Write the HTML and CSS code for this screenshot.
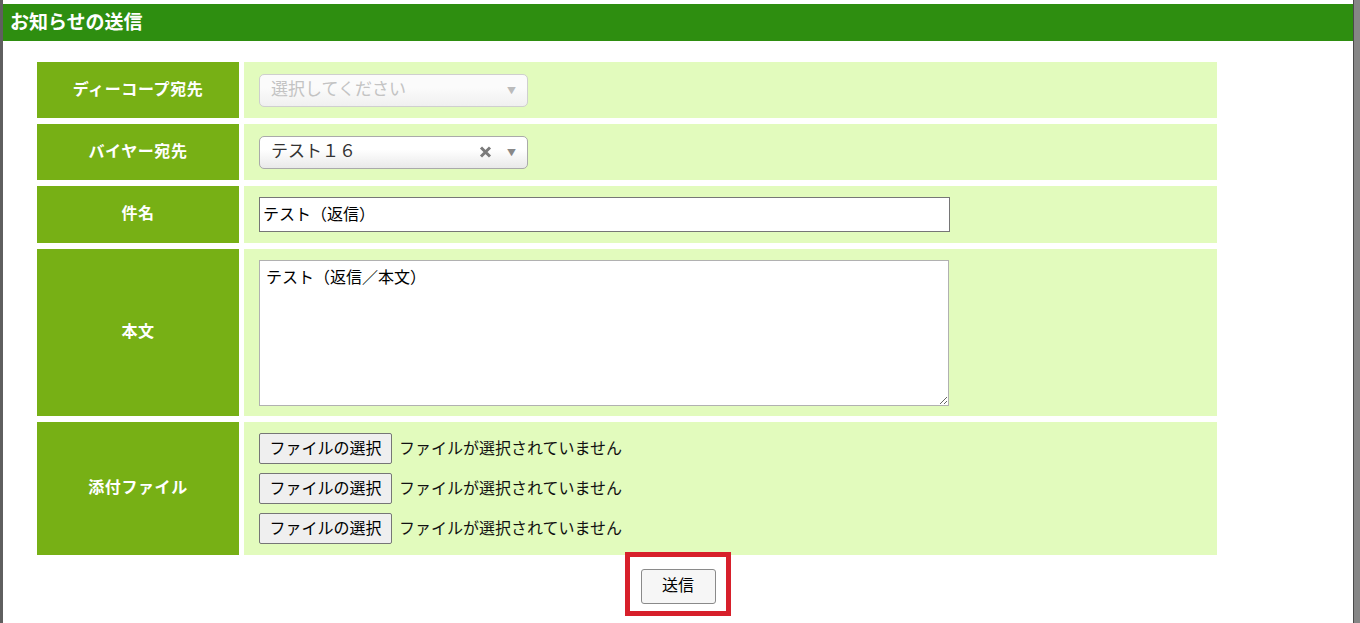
FILE: index.html
```html
<!DOCTYPE html>
<html lang="ja">
<head>
    <meta charset="UTF-8">
    <meta name="viewport" content="width=device-width, initial-scale=1.0">
    <title>お知らせの送信</title>
    <link rel="stylesheet" href="styles.css">
</head>
<body>
    <div class="page">
        <div class="main">
            <h1 class="title">お知らせの送信</h1>
            <div class="form-grid">
                <div class="label">ディーコープ宛先</div>
                <div class="value">
                    <div class="select disabled">
                        <span class="select-text">選択してください</span>
                        <span class="arrow">&#9660;</span>
                    </div>
                </div>

                <div class="label">バイヤー宛先</div>
                <div class="value">
                    <div class="select">
                        <span class="select-text">テスト１６</span>
                        <svg class="clear" width="13" height="12" viewBox="0 0 13 12"><path d="M2 1.5L11 10.5M11 1.5L2 10.5" stroke="#7a7a7a" stroke-width="3"/></svg>
                        <span class="arrow">&#9660;</span>
                    </div>
                </div>

                <div class="label">件名</div>
                <div class="value">
                    <input class="text-input" type="text" value="テスト（返信）">
                </div>

                <div class="label">本文</div>
                <div class="value">
                    <textarea class="body-input">テスト（返信／本文）</textarea>
                </div>

                <div class="label">添付ファイル</div>
                <div class="value">
                    <div class="files">
                        <div class="file-row"><span class="file-btn">ファイルの選択</span><span class="file-name">ファイルが選択されていません</span></div>
                        <div class="file-row"><span class="file-btn">ファイルの選択</span><span class="file-name">ファイルが選択されていません</span></div>
                        <div class="file-row"><span class="file-btn">ファイルの選択</span><span class="file-name">ファイルが選択されていません</span></div>
                    </div>
                </div>
            </div>
            <div class="actions">
                <span class="submit-wrap">
                    <button class="submit" type="button">送信</button>
                    <span class="highlight"></span>
                </span>
            </div>
        </div>
        <div class="side-bar"></div>
    </div>
</body>
</html>
```

FILE: styles.css
```css
html,body{
    margin:0;
    height:100%;
    overflow:hidden;
    background:#fff;
    font-family:"Noto Sans CJK JP", "Noto Sans", sans-serif;
}
.page{
    display:flex;
    height:100%;
}
.main{
    flex:1;
    border-left:3px solid #5f5f5f;
    padding-top:4px;
}
.side-bar{
    width:6px;
    background:#868686;
    border-left:1px solid #4a4a4a;
}
.title{
    margin:0;
    height:37px;
    line-height:34px;
    background:#2e8e10;
    color:#fff;
    font-size:19px;
    font-weight:bold;
    padding-left:7px;
}
.form-grid{
    display:grid;
    grid-template-columns:202px 973px;
    grid-template-rows:56px 56px 57px 167px 133px;
    column-gap:5px;
    row-gap:6px;
    margin:21px 0 0 34px;
}
.label{
    background:#77b015;
    color:#fff;
    font-weight:bold;
    font-size:16px;
    letter-spacing:0.6px;
    display:flex;
    align-items:center;
    justify-content:center;
    padding-bottom:5px;
}
.value{
    background:#e2fbbd;
    display:flex;
    align-items:center;
    padding-left:15px;
}
.select{
    box-sizing:border-box;
    width:269px;
    height:33px;
    border:1px solid #aaa;
    border-radius:5px;
    background:linear-gradient(#fff 40%, #e9e9e9);
    display:flex;
    align-items:center;
    padding:0 11px 0 11px;
    font-size:17px;
    color:#333;
}
.select-text{
    flex:1;
    padding-bottom:5px;
}
.select.disabled{
    border-color:#cfcfcf;
    background:linear-gradient(#fbfbfb 40%, #f0f0f0);
    color:#c3c3c3;
}
.clear{
    margin:0 15px 0 0;
}
.arrow{
    font-size:9px;
    color:#888;
}
.disabled .arrow{
    color:#bbb;
}
.text-input{
    width:691px;
    height:35px;
    box-sizing:border-box;
    border:1px solid #767676;
    padding:0 3px 3px;
    font-family:inherit;
    font-size:16px;
    color:#000;
    background:#fff;
}
.body-input{
    width:690px;
    height:146px;
    box-sizing:border-box;
    border:1px solid #b1b1b1;
    padding:3px 6px;
    font-family:inherit;
    font-size:16px;
    color:#000;
    resize:both;
}
.files{
    display:flex;
    flex-direction:column;
    gap:9px;
}
.file-row{
    display:flex;
    align-items:center;
    font-size:16px;
}
.file-btn{
    width:133px;
    height:31px;
    box-sizing:border-box;
    border:1px solid #767676;
    border-radius:2px;
    background:#efefef;
    display:flex;
    align-items:center;
    justify-content:center;
    padding-bottom:3px;
    margin-right:7px;
    color:#000;
}
.file-name{
    color:#111;
    padding-bottom:3px;
}
.actions{
    text-align:center;
    margin-top:14px;
}
.submit-wrap{
    position:relative;
    display:inline-block;
}
.submit{
    width:75px;
    height:35px;
    font-family:inherit;
    font-size:16px;
    background:#f6f6f6;
    border:1px solid #8a8a8a;
    border-radius:3px;
    color:#000;
    padding-bottom:6px;
}
.highlight{
    position:absolute;
    left:-16px;
    top:-17px;
    right:-15px;
    bottom:-12px;
    border:5px solid #d7202b;
}
```
